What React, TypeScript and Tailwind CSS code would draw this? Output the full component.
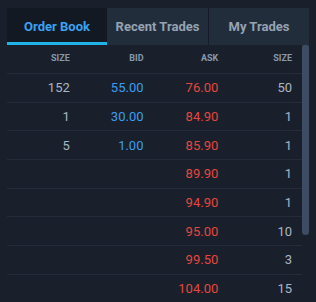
import { useState } from 'react';

type Row = { size?: string; bid?: string; ask?: string; askSize?: string };

const rows: Row[] = [
  { size: '152', bid: '55.00', ask: '76.00', askSize: '50' },
  { size: '1', bid: '30.00', ask: '84.90', askSize: '1' },
  { size: '5', bid: '1.00', ask: '85.90', askSize: '1' },
  { ask: '89.90', askSize: '1' },
  { ask: '94.90', askSize: '1' },
  { ask: '95.00', askSize: '10' },
  { ask: '99.50', askSize: '3' },
  { ask: '104.00', askSize: '15' },
];

const tabs = ['Order Book', 'Recent Trades', 'My Trades'];

export default function App() {
  const [active, setActive] = useState(0);

  return (
    <div
      className="flex h-[302px] w-[316px] flex-col overflow-hidden bg-[#1a202b] px-[7px] pt-[8px]"
      style={{ fontFamily: 'Roboto, "Liberation Sans", sans-serif' }}
    >
      <div className="flex h-[37px] shrink-0 bg-[#222d3c]">
        {tabs.map((t, i) => (
          <button
            key={t}
            onClick={() => setActive(i)}
            className={
              i === active
                ? 'flex w-[100px] items-center justify-center border-b-[3px] border-[#1fb3e8] bg-[#121923] pt-[3px] text-[13px] font-bold text-[#3aa2f2]'
                : i === 1
                  ? 'flex w-[102px] items-center justify-center border-r border-[#151c27] text-[13px] font-bold text-[#95a3b3]'
                  : 'flex flex-1 items-center justify-center text-[13px] font-bold text-[#95a3b3]'
            }
          >
            {t}
          </button>
        ))}
      </div>

      <div className="flex min-h-0 flex-1">
        <div className="min-w-0 flex-1">
          <div className="grid h-[29px] grid-cols-4 items-center border-b border-[#232c38] text-[9px] font-bold text-[#8799ad]">
            <span className="pr-[11px] text-right">SIZE</span>
            <span className="pr-[11px] text-right">BID</span>
            <span className="pr-[10px] text-right">ASK</span>
            <span className="pr-[10px] text-right">SIZE</span>
          </div>
          {rows.map((r, i) => (
            <div
              key={i}
              className="grid h-[28.7px] grid-cols-4 items-center border-b border-[#232c38] text-[13px] leading-[15px]"
            >
              <span className="pr-[11px] text-right text-[#a8b6c6]">{r.size}</span>
              <span className="pr-[11px] text-right text-[#3b9df0]">{r.bid}</span>
              <span className="pr-[10px] text-right text-[#e5463f]">{r.ask}</span>
              <span className="pr-[10px] text-right text-[#a8b6c6]">{r.askSize}</span>
            </div>
          ))}
        </div>
        <div className="w-[7px] shrink-0">
          <div className="h-[190px] rounded-b-[4px] rounded-t-[2px] bg-[#3c4d63]" />
        </div>
      </div>
    </div>
  );
}
